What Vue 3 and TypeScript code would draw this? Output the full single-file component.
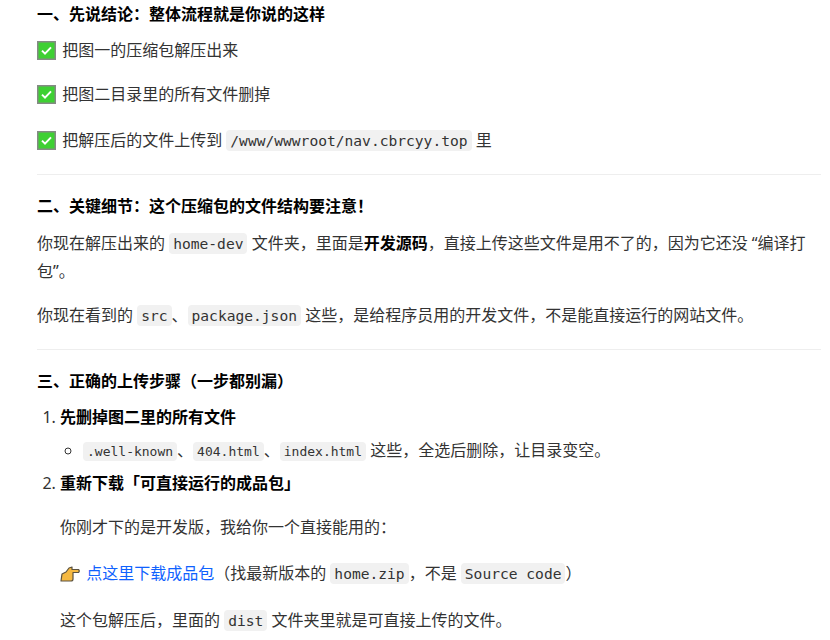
<script setup lang="ts">
</script>

<template>
  <main class="doc">
    <h3 class="tight">一、先说结论：整体流程就是你说的这样</h3>
    <p class="chk"><svg class="emoji" viewBox="0 0 19 19"><rect x="0.75" y="0.75" width="17.5" height="17.5" fill="#3ed033" stroke="#858a85" stroke-width="1.5"/><path d="M5 9.6 8 12.6 14 6.4" fill="none" stroke="#fff" stroke-width="2"/></svg> 把图一的压缩包解压出来</p>
    <p class="chk"><svg class="emoji" viewBox="0 0 19 19"><rect x="0.75" y="0.75" width="17.5" height="17.5" fill="#3ed033" stroke="#858a85" stroke-width="1.5"/><path d="M5 9.6 8 12.6 14 6.4" fill="none" stroke="#fff" stroke-width="2"/></svg> 把图二目录里的所有文件删掉</p>
    <p class="chk tall"><svg class="emoji" viewBox="0 0 19 19"><rect x="0.75" y="0.75" width="17.5" height="17.5" fill="#3ed033" stroke="#858a85" stroke-width="1.5"/><path d="M5 9.6 8 12.6 14 6.4" fill="none" stroke="#fff" stroke-width="2"/></svg> 把解压后的文件上传到 <code>/www/wwwroot/nav.cbrcyy.top</code> 里</p>
    <hr />
    <h3>二、关键细节：这个压缩包的文件结构要注意！</h3>
    <p>你现在解压出来的 <code>home-dev</code> 文件夹，里面是<strong>开发源码</strong>，直接上传这些文件是用不了的，因为它还没 “编译打包”。</p>
    <p>你现在看到的 <code>src</code>、<code>package.json</code> 这些，是给程序员用的开发文件，不是能直接运行的网站文件。</p>
    <hr />
    <h3 class="tight">三、正确的上传步骤（一步都别漏）</h3>
    <ol>
      <li>
        <strong>先删掉图二里的所有文件</strong>
        <ul>
          <li><code>.well-known</code>、<code>404.html</code>、<code>index.html</code> 这些，全选后删除，让目录变空。</li>
        </ul>
      </li>
      <li>
        <strong>重新下载「可直接运行的成品包」</strong>
        <p>你刚才下的是开发版，我给你一个直接能用的：</p>
        <p class="wide"><svg class="emoji hand" viewBox="0 0 20 16"><path d="M1 15 2 8 6 6 9 2 12 1V3.5H18.5Q20 5 18.5 6.5H13V13Q13 15 11 15Z" fill="#f5b942" stroke="#5c5340" stroke-width="1.2" stroke-linejoin="round"/></svg> <a href="#">点这里下载成品包</a>（找最新版本的 <code>home.zip</code>，不是 <code>Source code</code>）</p>
        <p class="last">这个包解压后，里面的 <code>dist</code> 文件夹里就是可直接上传的文件。</p>
      </li>
    </ol>
  </main>
</template>

<style scoped>
.doc {
  width: 784px;
  margin-left: 37px;
  height: 640px;
  overflow: hidden;
  font-family: "Noto Sans", "Noto Sans CJK SC", sans-serif;
  font-size: 16px;
  line-height: 28px;
  color: #333;
}
h3 {
  font-size: 16px;
  font-weight: 700;
  color: #000;
  margin: 0 0 9px;
  line-height: 28px;
}
h3.tight { margin-bottom: 8px; }
p { margin: 0 0 16px; }
.chk { margin-bottom: 16px; }
.chk.tall { margin-top: 18px; margin-bottom: 20px; }
hr {
  border: 0;
  height: 1px;
  background: #eeeeee;
  margin: 20px 0 17px;
}
code {
  font-family: "DejaVu Sans Mono", monospace;
  font-size: 14.6px;
  line-height: 1;
  background: #f1f1f1;
  border-radius: 4px;
  padding: 2px 4px;
}
ul code { font-size: 13px; }
strong { font-weight: 700; color: #000; }
a { color: #0f62fe; text-decoration: none; }
.emoji {
  width: 19px;
  height: 19px;
  vertical-align: -4px;
  margin-right: 2px;
}
.hand { width: 20px; height: 16px; vertical-align: -3px; margin-right: 2px; }
ol { margin: 0; padding-left: 23px; }
ul { margin: 5px 0 0; padding-left: 23px; list-style: circle; }
li { margin-bottom: 5px; }
ol > li > p { margin-top: 16px; }
ol > li > p.wide { margin-top: 18px; }
ol > li > p.last { margin-top: 19px; }
</style>
